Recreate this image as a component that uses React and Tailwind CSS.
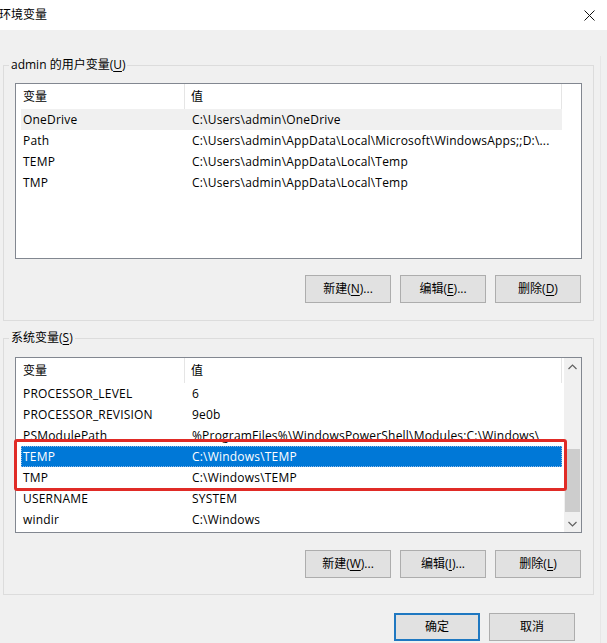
import React from 'react';

const userVars = [
  { name: 'OneDrive', value: 'C:\\Users\\admin\\OneDrive', hover: true },
  { name: 'Path', value: 'C:\\Users\\admin\\AppData\\Local\\Microsoft\\WindowsApps;;D:\\...' },
  { name: 'TEMP', value: 'C:\\Users\\admin\\AppData\\Local\\Temp' },
  { name: 'TMP', value: 'C:\\Users\\admin\\AppData\\Local\\Temp' },
];

const systemVars = [
  { name: 'PROCESSOR_LEVEL', value: '6' },
  { name: 'PROCESSOR_REVISION', value: '9e0b' },
  { name: 'PSModulePath', value: '%ProgramFiles%\\WindowsPowerShell\\Modules;C:\\Windows\\' },
  { name: 'TEMP', value: 'C:\\Windows\\TEMP', selected: true },
  { name: 'TMP', value: 'C:\\Windows\\TEMP' },
  { name: 'USERNAME', value: 'SYSTEM' },
  { name: 'windir', value: 'C:\\Windows' },
];

function Button({ label, hotkey, suffix = '', primary }) {
  return (
    <button
      className={`w-[86px] h-[28px] bg-[#e1e1e1] text-[12px] text-black flex items-center justify-center ${
        primary ? 'border-2 border-[#1f78c1]' : 'border border-[#adadad]'
      }`}
    >
      <span>
        {label}
        {hotkey && (
          <>
            (<span className="underline underline-offset-2">{hotkey}</span>)
          </>
        )}
        {suffix}
      </span>
    </button>
  );
}

function Header() {
  return (
    <div className="flex h-[25px] w-[546px] bg-white text-[12px] shrink-0">
      <div className="w-[169px] pl-[7px] flex items-center border-r border-[#e5e5e5]">变量</div>
      <div className="flex-1 pl-[6px] flex items-center border-r border-[#e5e5e5]">值</div>
    </div>
  );
}

function Row({ row }) {
  const bg = row.selected ? 'bg-[#0078d7] text-white' : row.hover ? 'bg-[#f0f0f0] text-black' : 'text-black';
  return (
    <div
      className={`ml-[5px] w-[541px] h-[21px] flex items-center text-[12px] tracking-[0.2px] whitespace-nowrap overflow-hidden ${bg} ${
        row.selected ? 'outline-1 outline-dotted outline-offset-[-1px] outline-[#8fb8e6]' : ''
      }`}
    >
      <div className="w-[169px] pl-[2px] shrink-0">{row.name}</div>
      <div className="pl-[2px] overflow-hidden">{row.value}</div>
    </div>
  );
}

function Scrollbar() {
  return (
    <div className="w-[17px] h-full bg-[#f0f0f0] flex flex-col shrink-0">
      <div className="h-[17px] flex items-center justify-center">
        <svg width="9" height="6" viewBox="0 0 9 6"><path d="M0.5 5 L4.5 1 L8.5 5" fill="none" stroke="#606060" strokeWidth="1.2" /></svg>
      </div>
      <div className="flex-1 flex flex-col px-[1px]">
        <div className="h-[74px]" />
        <div className="h-[63px] bg-[#cdcdcd]" />
      </div>
      <div className="h-[17px] flex items-center justify-center">
        <svg width="9" height="6" viewBox="0 0 9 6"><path d="M0.5 1 L4.5 5 L8.5 1" fill="none" stroke="#606060" strokeWidth="1.2" /></svg>
      </div>
    </div>
  );
}

function GroupBox({ title, hotkey, children, className }) {
  return (
    <fieldset className={`ml-[3px] w-[591px] border border-[#dcdcdc] px-[11px] ${className}`}>
      <legend className="ml-[-6px] px-[2px] text-[12px] leading-[18px] text-black">
        {title}(<span className="underline underline-offset-2">{hotkey}</span>)
      </legend>
      {children}
    </fieldset>
  );
}

export default function App() {
  return (
    <div
      className="w-[607px] h-[643px] bg-[#f0f0f0] overflow-hidden text-black"
      style={{ fontFamily: '"Open Sans", "Noto Sans CJK SC", sans-serif' }}
    >
      {/* Title bar */}
      <div className="h-[30px] bg-white flex items-center justify-between">
        <span className="text-[12px] ml-[-1px]">环境变量</span>
        <svg width="11" height="11" viewBox="0 0 11 11" className="mr-[12px]">
          <path d="M0.5 0.5 L10.5 10.5 M10.5 0.5 L0.5 10.5" stroke="#111" strokeWidth="1" />
        </svg>
      </div>

      <div className="border-r border-[#e6e6e6] w-[601px] h-[613px]">
        {/* User variables */}
        <GroupBox title="admin 的用户变量" hotkey="U" className="mt-[26px] pt-[9px] pb-[17px]">
          <div className="h-[176px] border border-[#828790] bg-white flex flex-col">
            <Header />
            {userVars.map((r) => (
              <Row key={r.name} row={r} />
            ))}
          </div>
          <div className="mt-[16px] flex justify-end gap-[9px] pr-[1px]">
            <Button label="新建" hotkey="N" suffix="..." />
            <Button label="编辑" hotkey="E" suffix="..." />
            <Button label="删除" hotkey="D" />
          </div>
        </GroupBox>

        {/* System variables */}
        <GroupBox title="系统变量" hotkey="S" className="mt-[8px] pt-[10px] pb-[16px]">
          <div className="relative">
            <div className="h-[176px] border border-[#828790] bg-white flex overflow-hidden">
              <div className="w-[546px] flex flex-col">
                <Header />
                {systemVars.map((r) => (
                  <Row key={r.name} row={r} />
                ))}
              </div>
              <div className="w-[2px]" />
              <Scrollbar />
            </div>
            {/* annotation */}
            <div className="absolute left-[-1px] top-[82px] w-[553px] h-[52px] border-[3px] border-[#e02b26] rounded-[3px] pointer-events-none" />
          </div>
          <div className="mt-[17px] flex justify-end gap-[9px] pr-[1px]">
            <Button label="新建" hotkey="W" suffix="..." />
            <Button label="编辑" hotkey="I" suffix="..." />
            <Button label="删除" hotkey="L" />
          </div>
        </GroupBox>

        {/* Dialog buttons */}
        <div className="mt-[18px] flex justify-end gap-[9px] pr-[25px]">
          <Button label="确定" primary />
          <Button label="取消" />
        </div>
      </div>
    </div>
  );
}
